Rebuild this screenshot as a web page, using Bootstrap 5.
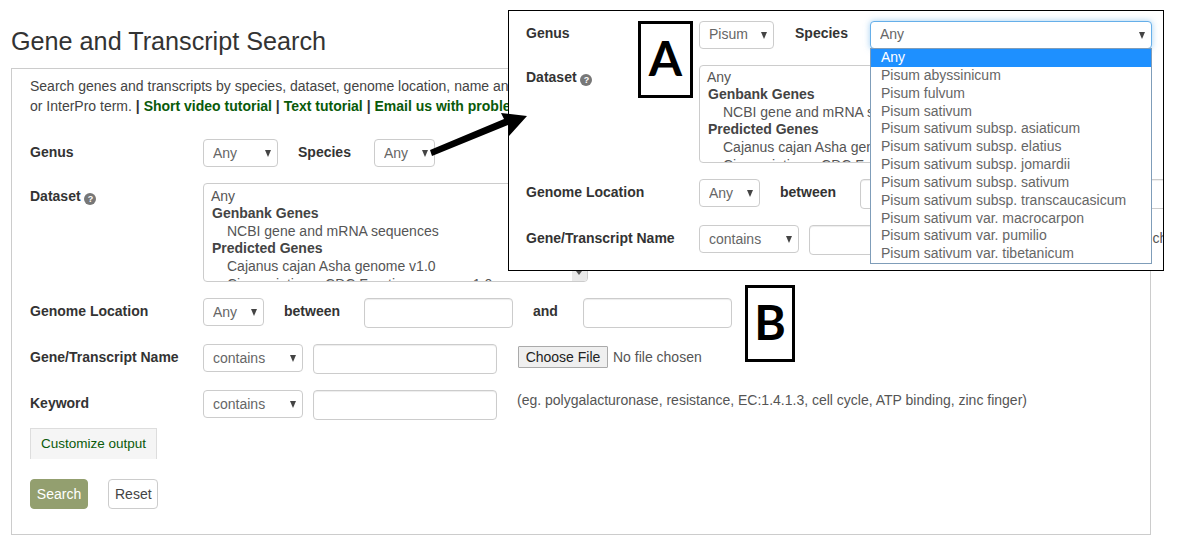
<!DOCTYPE html>
<html lang="en">
<head>
<meta charset="utf-8">
<title>Gene and Transcript Search</title>
<link href="https://cdn.jsdelivr.net/npm/bootstrap@5.3.0/dist/css/bootstrap.min.css" rel="stylesheet">
<style>
html,body{height:547px;overflow:hidden;background:#fff}
body{font-family:"Liberation Sans",Arial,sans-serif;font-size:14px;line-height:20px;color:#333;position:relative}
.gs-page{padding:26px 28px 0 11px}
.gs-title{font-size:25.2px;line-height:30px;font-weight:400;color:#333;margin:0 0 12px}
.gs-panel{border:1px solid #ccc;padding:7px 18px 25px;height:467px}
.gs-intro{margin:0 0 23px;color:#444}
.gs-intro a{color:#0a5a0a;font-weight:700;text-decoration:none}
.gs-intro b{color:#333}
.gs-row{display:flex;align-items:flex-start;margin-bottom:16px;white-space:nowrap}
.gs-lab{width:173px;flex:none;font-weight:700;padding-top:3px;color:#333}
.gs-lab2{font-weight:700;padding-top:3px;color:#333}
.gs-sel.form-select{font-size:14px;line-height:18px;height:28px;padding:4px 10px 4px 9px;color:#666;border-color:#ccc;border-radius:4px;flex:none;
 background-image:url("data:image/svg+xml,%3Csvg xmlns='http://www.w3.org/2000/svg' width='6' height='7'%3E%3Cpolygon points='0,0 6,0 3,7' fill='%23444'/%3E%3C/svg%3E");background-position:right 6px center;background-size:6px 7px}
.gs-w75{width:75px}.gs-w61{width:61px}.gs-w100{width:100px}.gs-w282{width:282px}
.gs-focus.form-select{border-color:#66afe9;box-shadow:0 0 6px rgba(102,175,233,.6)}
.gs-inp.form-control{height:30px;padding:4px 10px;font-size:14px;border-color:#ccc;border-radius:4px;flex:none;box-shadow:inset 0 1px 1px rgba(0,0,0,.075)}
.gs-w149{width:149px}.gs-w184{width:184px}
.gs-ml-s{margin-left:20px}.gs-ml-p{margin-left:23px}.gs-ml-b{margin-left:20px}.gs-ml-i{margin-left:24px}.gs-ml-a{margin-left:20px}.gs-ml-j{margin-left:25px}.gs-ml-f{margin-left:21px}.gs-ml-t{margin-left:10px}
.gs-data{width:385px;height:99px;border:1px solid #ccc;border-radius:4px;overflow:hidden;padding:3.6px 7px;line-height:17.6px;color:#555;flex:none;position:relative}
.gs-data b{display:block;color:#444;padding-left:1px}
.gs-data span{display:block;padding-left:16px}
.gs-thumb{position:absolute;right:0;bottom:0;width:15px;height:15px;background:#e9e9e9}
.gs-thumb::after{content:"";position:absolute;left:4px;top:5px;border:3px solid transparent;border-top:4px solid #555;border-bottom:0}
.gs-help{display:inline-block;width:12px;height:12px;border-radius:50%;background:#777;color:#fff;font-size:9px;line-height:12px;text-align:center;font-weight:700;vertical-align:-1px}
.gs-file{font-size:14px;color:#555;margin-top:2px;width:200px;flex:none}
.gs-file::file-selector-button{font-size:14px;font-family:"Liberation Sans",Arial,sans-serif;height:22px;width:90px;padding:0;margin-right:5px;background:#efefef;border:1px solid #aaa;border-radius:1px;color:#222}
.gs-hint{margin-left:20px;color:#555}
.gs-tab{display:block;width:127px;height:31px;border:1px solid #ddd;border-bottom:0;background:#f5f5f5;color:#0a5a0a;font-size:13.5px;padding:5px 0 0 10px;white-space:nowrap;text-decoration:none;margin-top:-8px}
.gs-actions{display:flex;gap:20px;margin-top:20px}
.gs-search.btn{background:#939f6f;border-color:#939f6f;color:#fff;font-size:14px;padding:4px 5px;height:30px;width:58px;line-height:20px;border-radius:4px}
.gs-reset.btn{background:#fff;border-color:#ccc;color:#444;font-size:14px;padding:4px 6px;height:30px;width:50px;line-height:20px;border-radius:4px}
.gs-inset{position:absolute;left:508px;top:10px;width:656px;height:261px;border:1px solid #000;background:#fff;overflow:hidden;padding:10px 0 0 17px}
.gs-inset .gs-row{width:900px}
.gs-inset .gs-up{padding-top:2px}
.gs-inset .gs-row:first-child .gs-sel.form-select{padding-top:3px;padding-bottom:5px}
.gs-inset .gs-data{height:98px;padding-top:2.6px}
.gs-inset .gs-ml-s{margin-left:21px}
.gs-inset .gs-ml-p{margin-left:22px}
.gs-drop{position:absolute;left:361px;top:37px;width:282px;height:216px;border:1px solid #7f9db9;background:#fff;color:#666;line-height:17.85px;z-index:2}
.gs-drop div{padding-left:10px}
.gs-drop .gs-on{background:#1e90ff;color:#fff}
.gs-badge{position:absolute;border:3px solid #000;background:#fff;color:#000;font-family:Lato,"Liberation Sans",sans-serif;font-weight:700;font-size:48px;display:flex;align-items:center;justify-content:center;line-height:1;padding-bottom:3px}
.gs-a{left:638px;top:21px;width:55px;height:77px}
.gs-b{left:745px;top:285px;width:50px;height:77px}
.gs-arrow{position:absolute;left:425px;top:105px}
</style>
</head>
<body>
<div class="gs-page">
  <h1 class="gs-title">Gene and Transcript Search</h1>
  <form class="gs-panel">
    <p class="gs-intro">Search genes and transcripts by species, dataset, genome location, name and keyword, GO term<br>or InterPro term. <b>|</b> <a href="#">Short video tutorial</a> <b>|</b> <a href="#">Text tutorial</a> <b>|</b> <a href="#">Email us with problems</a></p>
    <div class="gs-row">
      <label class="gs-lab">Genus</label>
      <select class="form-select gs-sel gs-w75"><option>Any</option></select>
      <label class="gs-lab2 gs-ml-s">Species</label>
      <select class="form-select gs-sel gs-w61 gs-ml-p"><option>Any</option></select>
    </div>
    <div class="gs-row">
      <label class="gs-lab">Dataset <span class="gs-help">?</span></label>
      <div class="gs-data">Any<b>Genbank Genes</b><span>NCBI gene and mRNA sequences</span><b>Predicted Genes</b><span>Cajanus cajan Asha genome v1.0</span><span>Cicer arietinum CDC Frontier genome v1.0</span><i class="gs-thumb"></i></div>
    </div>
    <div class="gs-row">
      <label class="gs-lab">Genome Location</label>
      <select class="form-select gs-sel gs-w61"><option>Any</option></select>
      <label class="gs-lab2 gs-ml-b">between</label>
      <input class="form-control gs-inp gs-w149 gs-ml-i" type="text">
      <label class="gs-lab2 gs-ml-a">and</label>
      <input class="form-control gs-inp gs-w149 gs-ml-j" type="text">
    </div>
    <div class="gs-row">
      <label class="gs-lab">Gene/Transcript Name</label>
      <select class="form-select gs-sel gs-w100"><option>contains</option></select>
      <input class="form-control gs-inp gs-w184 gs-ml-t" type="text">
      <input class="gs-file gs-ml-f" type="file">
    </div>
    <div class="gs-row">
      <label class="gs-lab">Keyword</label>
      <select class="form-select gs-sel gs-w100"><option>contains</option></select>
      <input class="form-control gs-inp gs-w184 gs-ml-t" type="text">
      <span class="gs-hint">(eg. polygalacturonase, resistance, EC:1.4.1.3, cell cycle, ATP binding, zinc finger)</span>
    </div>
    <a class="gs-tab" href="#">Customize output</a>
    <div class="gs-actions">
      <button type="button" class="btn gs-search">Search</button>
      <button type="button" class="btn gs-reset">Reset</button>
    </div>
  </form>
</div>

<div class="gs-inset">
  <div class="gs-row">
    <label class="gs-lab gs-up">Genus</label>
    <select class="form-select gs-sel gs-w75"><option>Pisum</option></select>
    <label class="gs-lab2 gs-up gs-ml-s">Species</label>
    <select class="form-select gs-sel gs-w282 gs-focus gs-ml-p"><option>Any</option></select>
  </div>
  <div class="gs-row">
    <label class="gs-lab gs-up">Dataset <span class="gs-help">?</span></label>
    <div class="gs-data">Any<b>Genbank Genes</b><span>NCBI gene and mRNA sequences</span><b>Predicted Genes</b><span>Cajanus cajan Asha genome v1.0</span><span>Cicer arietinum CDC Frontier genome v1.0</span></div>
  </div>
  <div class="gs-row">
    <label class="gs-lab">Genome Location</label>
    <select class="form-select gs-sel gs-w61"><option>Any</option></select>
    <label class="gs-lab2 gs-ml-b">between</label>
    <input class="form-control gs-inp gs-w149 gs-ml-i" type="text">
    <label class="gs-lab2 gs-ml-a">and</label>
    <input class="form-control gs-inp gs-w149 gs-ml-j" type="text">
  </div>
  <div class="gs-row">
    <label class="gs-lab">Gene/Transcript Name</label>
    <select class="form-select gs-sel gs-w100"><option>contains</option></select>
    <input class="form-control gs-inp gs-w184 gs-ml-t" type="text">
    <input class="gs-file gs-ml-f" type="file">
  </div>
  <div class="gs-drop">
    <div class="gs-on">Any</div>
    <div>Pisum abyssinicum</div>
    <div>Pisum fulvum</div>
    <div>Pisum sativum</div>
    <div>Pisum sativum subsp. asiaticum</div>
    <div>Pisum sativum subsp. elatius</div>
    <div>Pisum sativum subsp. jomardii</div>
    <div>Pisum sativum subsp. sativum</div>
    <div>Pisum sativum subsp. transcaucasicum</div>
    <div>Pisum sativum var. macrocarpon</div>
    <div>Pisum sativum var. pumilio</div>
    <div>Pisum sativum var. tibetanicum</div>
  </div>
</div>

<div class="gs-badge gs-a">A</div>
<div class="gs-badge gs-b">B</div>
<svg class="gs-arrow" width="105" height="55" viewBox="425 105 105 55" aria-hidden="true"><polygon points="430,150 432,156 508,125 509,136 527,116 501,113 504,119" fill="#000"/></svg>
</body>
</html>
